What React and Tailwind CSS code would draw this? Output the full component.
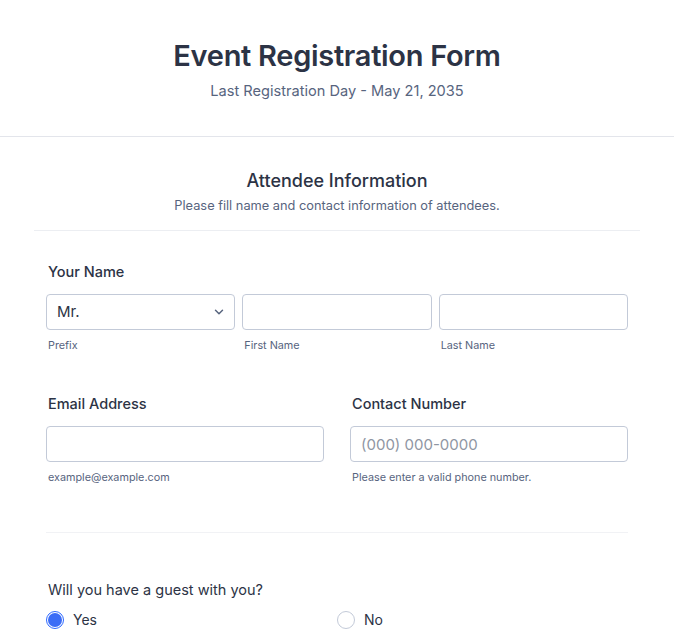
import React from 'react';
import { ChevronDown } from 'lucide-react';

const inputCls =
    'w-full h-[36px] px-[10px] border border-[#c3cad8] rounded-[4px] bg-white text-[15px] text-[#2c3345] placeholder-[#8f96a3] focus:outline-none';

const labelCls = 'block pl-[2px] text-[14.5px] leading-[20px] font-medium text-[#2c3345]';

const Sub = ({ children }) => (
    <p className="mt-[9px] pl-[2px] text-[10.8px] leading-[14px] text-[#57647e]">{children}</p>
);

const App = () => {
    return (
        <div className="min-h-screen bg-white" style={{ fontFamily: 'Inter, "Noto Sans", sans-serif' }}>
            <header className="h-[137px] border-b border-[#e3e5eb] flex flex-col items-center pt-[38px]">
                <h1 className="text-[29px] leading-[36px] font-semibold text-[#2c3345] tracking-[-0.3px]">
                    Event Registration Form
                </h1>
                <p className="mt-[7px] text-[14.6px] leading-[20px] text-[#57647e]">
                    Last Registration Day - May 21, 2035
                </p>
            </header>

            <div className="px-[34px]">
                <div className="pt-[32px] pb-[15px] border-b border-[#eceef2] text-center">
                    <h2 className="text-[18px] leading-[24px] font-medium text-[#2c3345]">Attendee Information</h2>
                    <p className="mt-[4px] text-[12.8px] leading-[18px] text-[#57647e]">
                        Please fill name and contact information of attendees.
                    </p>
                </div>
            </div>

            <form className="px-[46px]">
                <div className="pt-[31px]">
                    <label className={labelCls}>Your Name</label>
                    <div className="mt-[12px] grid grid-cols-3 gap-[7px]">
                        <div>
                            <div className="relative">
                                <select className={inputCls + ' appearance-none'} defaultValue="Mr.">
                                    <option>Mr.</option>
                                    <option>Mrs.</option>
                                    <option>Ms.</option>
                                    <option>Dr.</option>
                                </select>
                                <ChevronDown className="absolute right-[9px] top-[11px] w-[14px] h-[14px] text-[#57647e] pointer-events-none" strokeWidth={2.5} />
                            </div>
                            <Sub>Prefix</Sub>
                        </div>
                        <div>
                            <input type="text" className={inputCls} />
                            <Sub>First Name</Sub>
                        </div>
                        <div>
                            <input type="text" className={inputCls} />
                            <Sub>Last Name</Sub>
                        </div>
                    </div>
                </div>

                <div className="pt-[41px] grid grid-cols-2 gap-[26px] pb-[47px] border-b border-[#f1f2f5]">
                    <div>
                        <label className={labelCls}>Email Address</label>
                        <input type="email" className={inputCls + ' mt-[12px]'} />
                        <Sub>example@example.com</Sub>
                    </div>
                    <div>
                        <label className={labelCls}>Contact Number</label>
                        <input type="tel" placeholder="(000) 000-0000" className={inputCls + ' mt-[12px]'} />
                        <Sub>Please enter a valid phone number.</Sub>
                    </div>
                </div>

                <div className="pt-[47px]">
                    <p className="pl-[2px] text-[14.5px] leading-[20px] text-[#2c3345]">Will you have a guest with you?</p>
                    <div className="mt-[9px] grid grid-cols-2">
                        <label className="flex items-center gap-[9px] text-[14px] text-[#2c3345]">
                            <span className="w-[18px] h-[18px] rounded-full border border-[#2e69ff] flex items-center justify-center">
                                <span className="w-[14px] h-[14px] rounded-full bg-[#3b6cf6]" />
                            </span>
                            Yes
                        </label>
                        <label className="flex items-center gap-[9px] text-[14px] text-[#2c3345]">
                            <span className="w-[18px] h-[18px] rounded-full border border-[#c3cad8] bg-white" />
                            No
                        </label>
                    </div>
                </div>
            </form>
        </div>
    );
};

export default App;
